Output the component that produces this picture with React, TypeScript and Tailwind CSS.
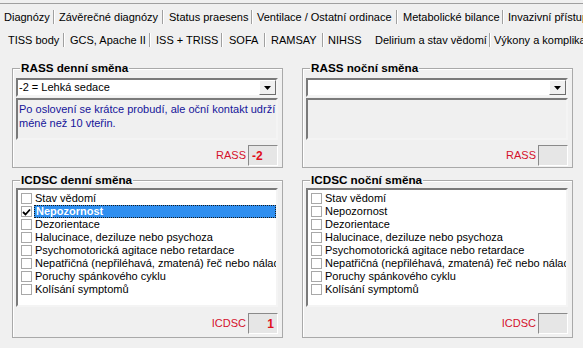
import type { ReactNode } from "react";

const topTabs = [
  { label: "Diagnózy", width: 53, pad: 4 },
  { label: "Závěrečné diagnózy", width: 107, pad: 4 },
  { label: "Status praesens", width: 87, pad: 5 },
  { label: "Ventilace / Ostatní ordinace", width: 143, pad: 4 },
  { label: "Metabolické bilance", width: 104, pad: 5 },
  { label: "Invazivní přístupy", width: 120, pad: 4 },
];

const bottomTabs = [
  { label: "TISS body", width: 63, pad: 8, sep: true },
  { label: "GCS, Apache II", width: 84, pad: 5, sep: true },
  { label: "ISS + TRISS", width: 70, pad: 5, sep: true },
  { label: "SOFA", width: 41, pad: 6, sep: true },
  { label: "RAMSAY", width: 56, pad: 5, sep: true },
  { label: "NIHSS", width: 41, pad: 4, sep: false },
  { label: "Delirium a stav vědomí", width: 122, pad: 8, sep: true },
  { label: "Výkony a komplikace", width: 120, pad: 3, sep: true },
];

const symptoms = [
  "Stav vědomí",
  "Nepozornost",
  "Dezorientace",
  "Halucinace, deziluze nebo psychoza",
  "Psychomotorická agitace nebo retardace",
  "Nepatřičná (nepřiléhavá, zmatená) řeč nebo nálada",
  "Poruchy spánkového cyklu",
  "Kolísání symptomů",
];

export default function App() {
  return (
    <main
      className="h-[348px] w-[583px] overflow-hidden bg-[#f0f0f0] text-[11px] text-black"
      style={{ fontFamily: '"Liberation Sans", Arial, sans-serif' }}
    >
      <div className="h-[3px]" />
      <div className="h-px bg-[#a0a0a0]" />

      <div className="mt-[5px] flex h-[16px] whitespace-nowrap">
        {topTabs.map((tab) => (
          <Tab key={tab.label} label={tab.label} width={tab.width} pad={tab.pad} sep />
        ))}
      </div>

      <div className="mt-[7px] flex h-[16px] whitespace-nowrap">
        {bottomTabs.map((tab) => (
          <Tab
            key={tab.label}
            label={tab.label}
            width={tab.width}
            pad={tab.pad}
            sep={tab.sep}
          />
        ))}
      </div>

      <div className="mt-[20px] grid grid-cols-[271px_271px] gap-x-[19px] gap-y-[12px] pl-[12px]">
        <RassGroup
          title="RASS denní směna"
          value="-2 = Lehká sedace"
          lines={["Po oslovení se krátce probudí, ale oční kontakt udrží", "méně než 10 vteřin."]}
          score="-2"
        />
        <RassGroup title="RASS noční směna" value="" lines={[]} score="" />
        <IcdscGroup title="ICDSC denní směna" checked={1} score="1" />
        <IcdscGroup title="ICDSC noční směna" score="" />
      </div>
    </main>
  );
}

function Tab({
  label,
  width,
  pad,
  sep,
}: {
  label: string;
  width: number;
  pad: number;
  sep: boolean;
}) {
  return (
    <div className="flex shrink-0" style={{ width: width + 2 }}>
      <div
        className="flex-1 overflow-hidden leading-[16px]"
        style={{ paddingLeft: pad }}
      >
        {label}
      </div>
      {sep ? (
        <div className="mt-px flex h-[14px]">
          <span className="w-px bg-[#a0a0a0]" />
          <span className="w-px bg-white" />
        </div>
      ) : (
        <div className="w-[2px]" />
      )}
    </div>
  );
}

function GroupBox({ title, children }: { title: string; children: ReactNode }) {
  return (
    <div className="relative border border-[#a9a9a9] pl-[3px] pr-[4px] shadow-[inset_1px_1px_0_#ffffff]">
      <span className="absolute left-[7px] top-[-7px] bg-[#f0f0f0] px-px text-[11.7px] font-bold leading-[12px]">
        {title}
      </span>
      {children}
    </div>
  );
}

function ScoreRow({ label, score, align }: { label: string; score: string; align: "left" | "right" }) {
  return (
    <div className="flex items-center justify-end gap-[2px]">
      <span className="text-[#d4102c]">{label}</span>
      <div
        className={`flex h-[21px] w-[30px] items-center border border-b-white border-l-[#8a8a8a] border-r-white border-t-[#8a8a8a] bg-[#e6e6e6] px-[3px] text-[12px] font-bold text-[#e0101c] ${
          align === "right" ? "justify-end" : "justify-start"
        }`}
      >
        {score}
      </div>
    </div>
  );
}

function RassGroup({
  title,
  value,
  lines,
  score,
}: {
  title: string;
  value: string;
  lines: string[];
  score: string;
}) {
  return (
    <GroupBox title={title}>
      <div className="pb-[1px] pt-[9px]">
        <div className="flex h-[19px] items-center border-2 border-b-[#f4f4f4] border-l-[#7a7a7a] border-r-[#f4f4f4] border-t-[#7a7a7a] bg-white">
          <span className="flex-1 pl-px leading-[15px]">{value}</span>
          <div className="flex h-[15px] w-[17px] items-center justify-center border border-b-[#6d6d6d] border-l-white border-r-[#6d6d6d] border-t-white bg-[#f0f0f0]">
            <svg width="7" height="4" viewBox="0 0 7 4">
              <path d="M0 0h7L3.5 4z" fill="#000" />
            </svg>
          </div>
        </div>
        <div className="mt-px h-[42px] border-2 border-b-[#f4f4f4] border-l-[#7a7a7a] border-r-[#f4f4f4] border-t-[#7a7a7a] bg-[#f0f0f0] pl-px pt-[2px] leading-[14px] text-[#15159a]">
          {lines.map((line) => (
            <div key={line} className="whitespace-nowrap">
              {line}
            </div>
          ))}
        </div>
        <div className="mt-[5px]">
          <ScoreRow label="RASS" score={score} align="left" />
        </div>
      </div>
    </GroupBox>
  );
}

function IcdscGroup({
  title,
  checked,
  score,
}: {
  title: string;
  checked?: number;
  score: string;
}) {
  return (
    <GroupBox title={title}>
      <div className="pb-[3px] pt-[7px]">
        <div className="h-[119px] overflow-hidden border-2 border-b-[#f4f4f4] border-l-[#7a7a7a] border-r-[#f4f4f4] border-t-[#7a7a7a] bg-white pt-[2px]">
          {symptoms.map((item, index) => {
            const active = index === checked;
            return (
              <div key={item} className="flex h-[13px] items-center whitespace-nowrap">
                <span className="ml-[3px] flex h-[11px] w-[11px] shrink-0 items-center justify-center border border-[#a8a8a8] bg-white">
                  {active && (
                    <svg width="9" height="8" viewBox="0 0 9 8">
                      <path d="M1 4l2.5 2.5L8 1.5" stroke="#000" strokeWidth="1.8" fill="none" />
                    </svg>
                  )}
                </span>
                <span
                  className={`ml-[2px] flex h-[13px] flex-1 items-center pl-px leading-[13px] ${
                    active
                      ? "border border-dotted border-[#1a1a1a] bg-[#2f8ff0] font-bold text-white"
                      : ""
                  }`}
                >
                  {item}
                </span>
              </div>
            );
          })}
        </div>
        <div className="mt-[6px]">
          <ScoreRow label="ICDSC" score={score} align="right" />
        </div>
      </div>
    </GroupBox>
  );
}
